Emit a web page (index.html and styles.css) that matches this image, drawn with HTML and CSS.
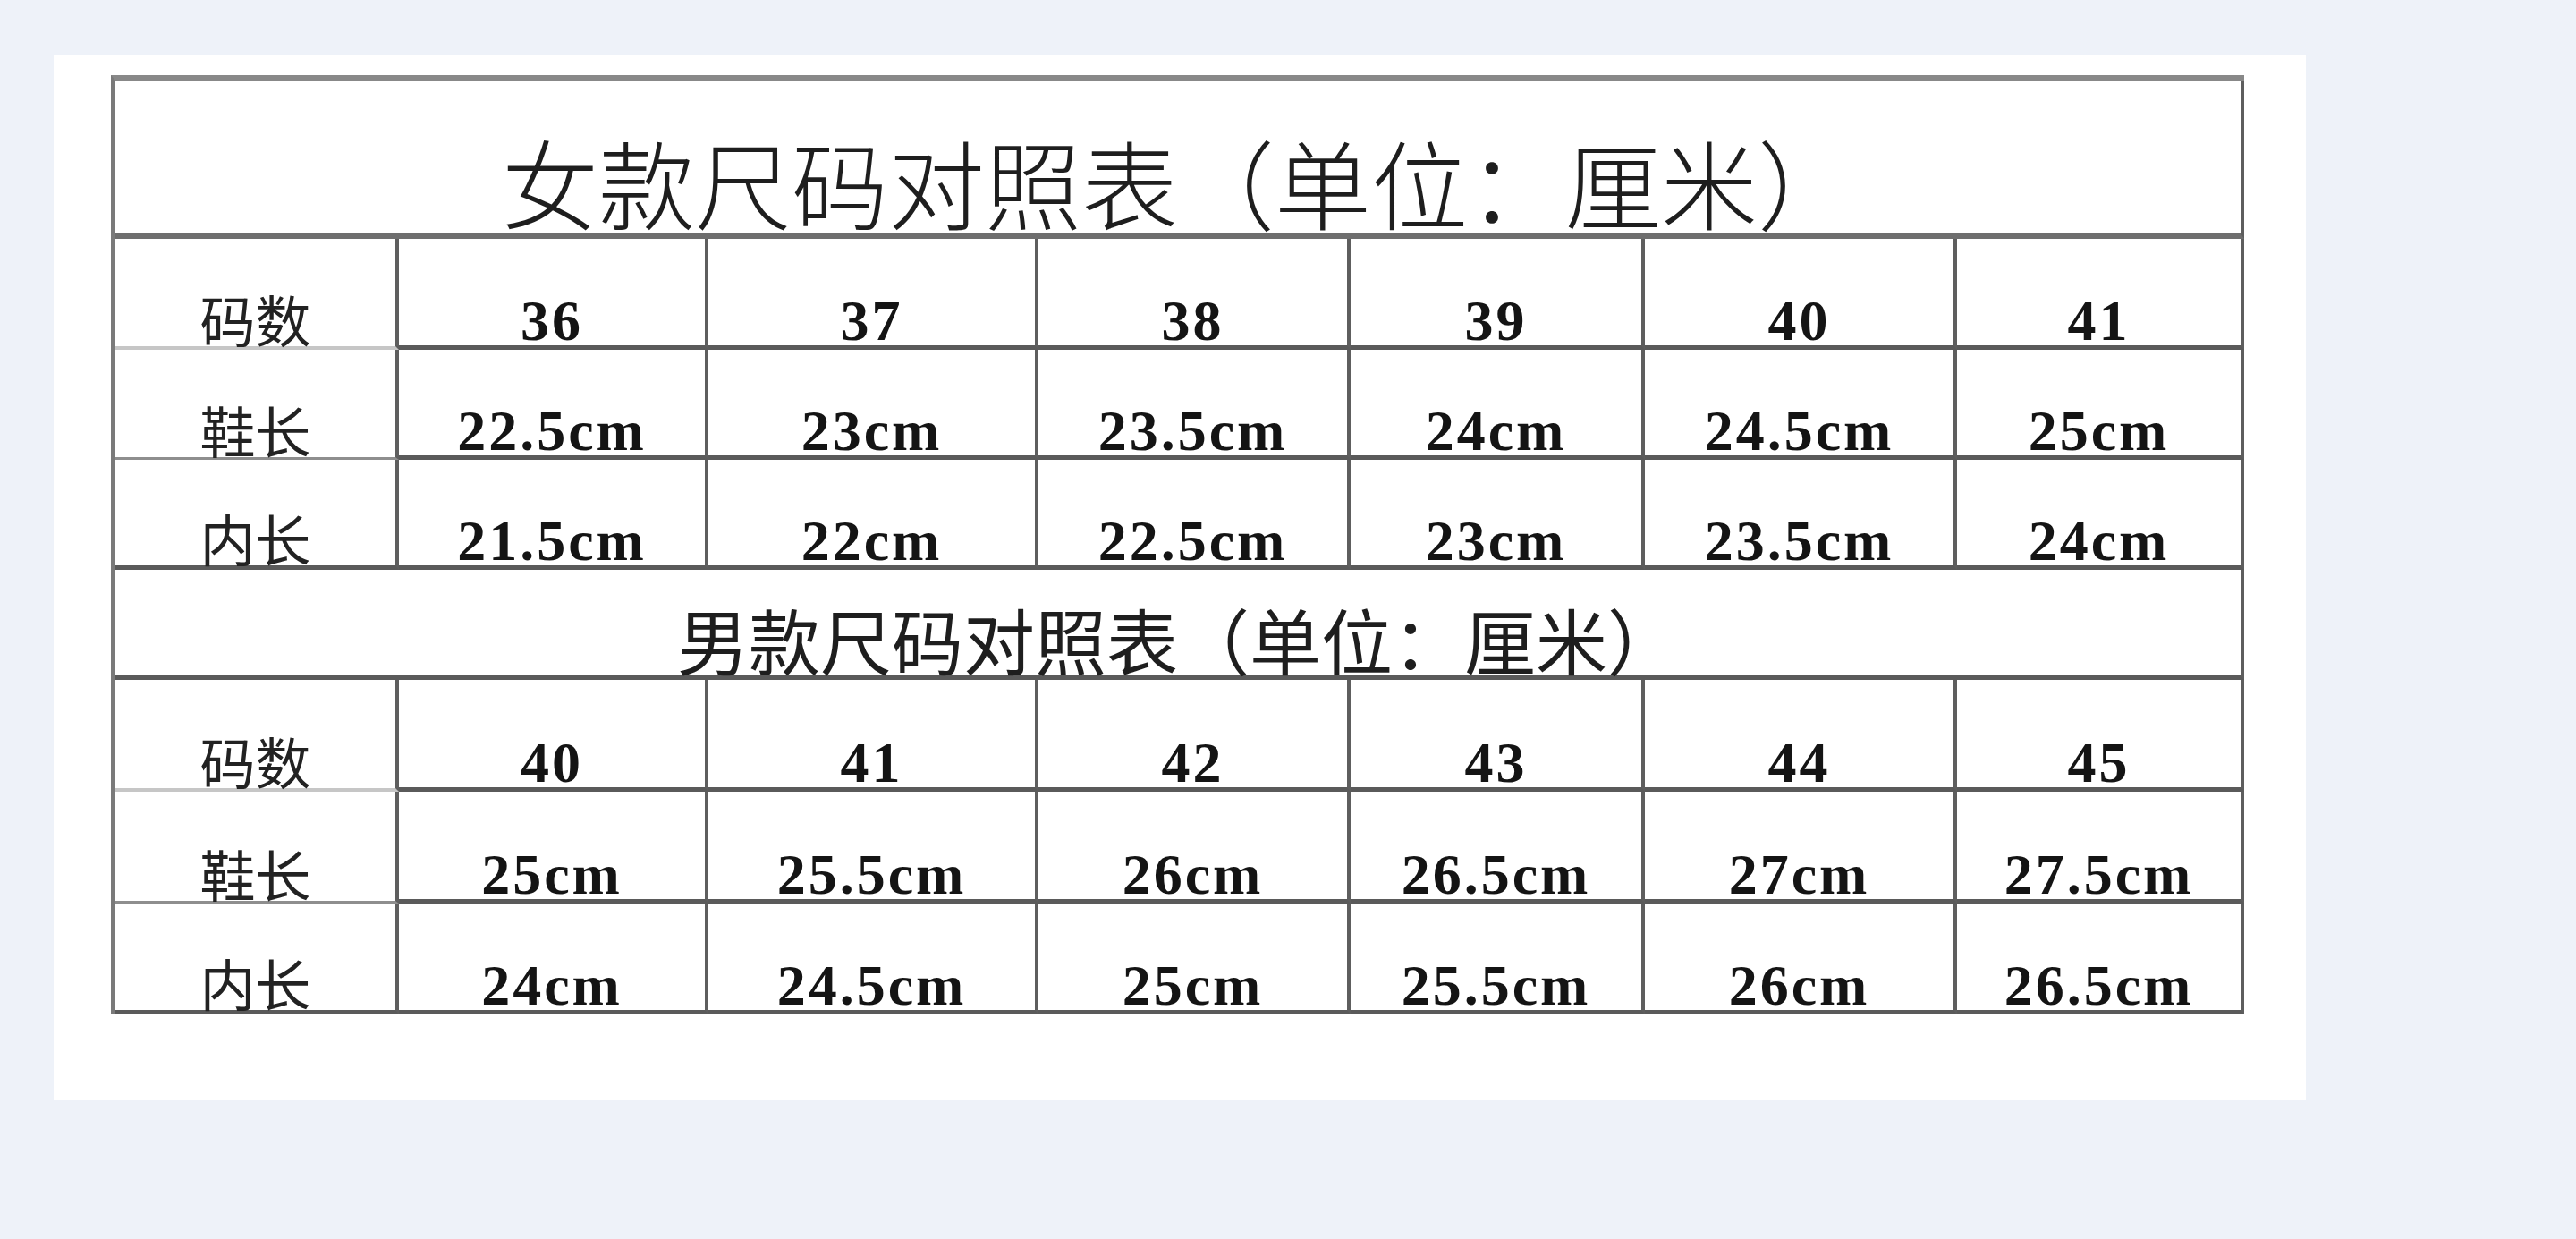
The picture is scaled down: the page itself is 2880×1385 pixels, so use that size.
FILE: index.html
```html
<!DOCTYPE html>
<html lang="zh-CN">
<head>
<meta charset="utf-8">
<title>尺码对照表</title>
<link rel="stylesheet" href="styles.css">
</head>
<body>
<div class="card">
  <div class="sheet">
    <div class="cell title">女款尺码对照表（单位：厘米）</div>

    <div class="cell lbl soft">码数</div>
    <div class="cell num">36</div>
    <div class="cell num">37</div>
    <div class="cell num">38</div>
    <div class="cell num">39</div>
    <div class="cell num">40</div>
    <div class="cell num">41</div>

    <div class="cell lbl thin">鞋长</div>
    <div class="cell num">22.5cm</div>
    <div class="cell num">23cm</div>
    <div class="cell num">23.5cm</div>
    <div class="cell num">24cm</div>
    <div class="cell num">24.5cm</div>
    <div class="cell num">25cm</div>

    <div class="cell lbl">内长</div>
    <div class="cell num">21.5cm</div>
    <div class="cell num">22cm</div>
    <div class="cell num">22.5cm</div>
    <div class="cell num">23cm</div>
    <div class="cell num">23.5cm</div>
    <div class="cell num">24cm</div>

    <div class="cell subtitle">男款尺码对照表（单位：厘米）</div>

    <div class="cell lbl soft">码数</div>
    <div class="cell num">40</div>
    <div class="cell num">41</div>
    <div class="cell num">42</div>
    <div class="cell num">43</div>
    <div class="cell num">44</div>
    <div class="cell num">45</div>

    <div class="cell lbl thin">鞋长</div>
    <div class="cell num">25cm</div>
    <div class="cell num">25.5cm</div>
    <div class="cell num">26cm</div>
    <div class="cell num">26.5cm</div>
    <div class="cell num">27cm</div>
    <div class="cell num">27.5cm</div>

    <div class="cell lbl">内长</div>
    <div class="cell num">24cm</div>
    <div class="cell num">24.5cm</div>
    <div class="cell num">25cm</div>
    <div class="cell num">25.5cm</div>
    <div class="cell num">26cm</div>
    <div class="cell num">26.5cm</div>
  </div>
</div>
</body>
</html>
```

FILE: styles.css
```css
html, body {
  margin: 0;
  padding: 0;
  background: #eef2f9;
}

body {
  width: 2880px;
  height: 1385px;
  overflow: hidden;
  padding-top: 61px;
  box-sizing: border-box;
}

.card {
  margin-left: 60px;
  width: 2518px;
  height: 1169px;
  background: #ffffff;
  padding: 23px 0 0 64px;
  box-sizing: border-box;
}

.sheet {
  display: grid;
  grid-template-columns: 317px 346px 369px 349px 329px 349px 321px;
  grid-template-rows: 177px 124px 123px 123px 123px 125px 125px 124px;
  width: max-content;
  border-left: 5px solid #7a7a7a;
  border-top: 6px solid #888888;
  color: #141414;
}

.cell {
  display: flex;
  align-items: flex-end;
  justify-content: center;
  box-sizing: border-box;
  border-right: 4px solid #5e5e5e;
  border-bottom: 5px solid #5a5a5a;
  white-space: nowrap;
}

.title {
  grid-column: 1 / -1;
  font: 300 108px/1 "Noto Sans CJK SC", sans-serif;
  color: #1e1e1e;
  padding-bottom: 5px;
  border-bottom: 6px solid #6e6e6e;
}

.subtitle {
  grid-column: 1 / -1;
  font: 400 80px/1 "Noto Sans CJK SC", sans-serif;
  color: #1e1e1e;
  padding-bottom: 2px;
}

.lbl {
  font: 400 62px/1 "Noto Sans CJK SC", sans-serif;
  color: #222222;
  padding-bottom: 0;
}

.lbl.soft {
  border-bottom: 4px solid #c6c6c6;
}

.lbl.thin {
  border-bottom: 3px solid #8e8e8e;
}

.num {
  font: 700 64px/0.8 "Liberation Serif", "Noto Sans CJK SC", serif;
  letter-spacing: 3px;
  padding-bottom: 2px;
}
```
